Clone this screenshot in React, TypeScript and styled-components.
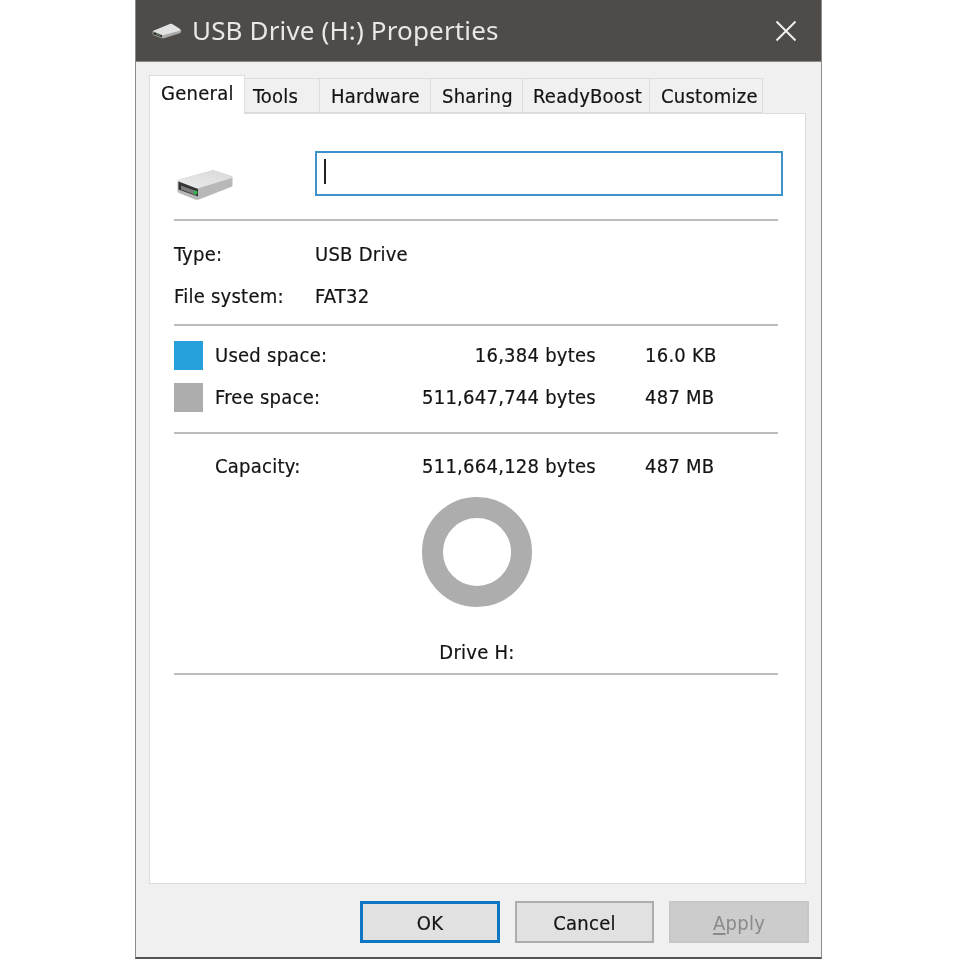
import React from "react";
import styled, { createGlobalStyle } from "styled-components";

const Global = createGlobalStyle`
  html, body { margin: 0; padding: 0; background: #fff; }
  body {
    font-family: "DejaVu Sans", "Noto Sans", sans-serif;
    font-stretch: condensed;
    letter-spacing: 0.25px;
    color: #141414;
    -webkit-text-stroke: 0.2px #141414;
  }
`;

const Page = styled.div`
  width: 960px;
  height: 960px;
  display: flex;
  padding-left: 135px;
  box-sizing: border-box;
  overflow: hidden;
`;

const Window = styled.div`
  width: 687px;
  height: 959px;
  flex: none;
  box-sizing: border-box;
  background: #f0f0f0;
  border-left: 1px solid #8c8c8c;
  border-right: 1px solid #8c8c8c;
  border-bottom: 2px solid #55524f;
  display: flex;
  flex-direction: column;
  filter: blur(0.35px);
`;

const TitleBar = styled.div`
  height: 62px;
  flex: none;
  background: #4e4b48;
  border-bottom: 1px solid #8a8886;
  box-sizing: border-box;
  display: flex;
  align-items: center;
  padding: 0 24px 0 16px;
  color: #e8e8e6;
  -webkit-text-stroke: 0;
  font-family: "Noto Sans", sans-serif;
  font-stretch: normal;
  letter-spacing: 0.15px;
  font-size: 26px;
`;

const TitleText = styled.span`
  margin-left: 10px;
  flex: 1;
  position: relative;
  top: -1px;
  white-space: nowrap;
`;

const Body = styled.div`
  flex: 1;
  padding: 13px 15px 0 13px;
  display: flex;
  flex-direction: column;
  min-height: 0;
`;

const TabStrip = styled.div`
  display: flex;
  align-items: flex-end;
  height: 38px;
  flex: none;
  position: relative;
  z-index: 1;
`;

const Tab = styled.div<{ $w: number; $pad?: number; $active?: boolean }>`
  width: ${(p) => p.$w}px;
  height: ${(p) => (p.$active ? 39 : 35)}px;
  margin-bottom: ${(p) => (p.$active ? -1 : 0)}px;
  box-sizing: border-box;
  background: ${(p) => (p.$active ? "#fff" : "#f0f0f0")};
  border: 1px solid #dcdcdc;
  border-left-width: ${(p) => (p.$active ? 1 : 0)}px;
  border-bottom: ${(p) => (p.$active ? "none" : "1px solid #dcdcdc")};
  display: flex;
  align-items: center;
  font-size: 20px;
  padding-left: ${(p) => p.$pad ?? 11}px;
  padding-bottom: ${(p) => (p.$active ? 4 : 0)}px;
  white-space: nowrap;
`;

const Panel = styled.div`
  width: 657px;
  height: 771px;
  box-sizing: border-box;
  background: #fff;
  border: 1px solid #dcdcdc;
  padding: 37px 27px 0 24px;
  display: flex;
  flex-direction: column;
`;

const NameRow = styled.div`
  height: 68px;
  display: flex;
  align-items: flex-start;
  flex: none;
`;

const DriveSlot = styled.div`
  width: 141px;
  flex: none;
  padding: 19px 0 0 3px;
  box-sizing: border-box;
`;

const NameField = styled.div`
  width: 468px;
  height: 45px;
  margin-right: -5px;
  box-sizing: border-box;
  border: 2px solid #3f92c9;
  display: flex;
  align-items: center;
  padding: 0 0 5px 7px;
`;

const Caret = styled.div`
  width: 2px;
  height: 25px;
  background: #222;
`;

const Rule = styled.div`
  height: 2px;
  flex: none;
  background: #bcbcbc;
`;

const InfoBlock = styled.div`
  padding: 12px 0 7px;
  display: flex;
  flex-direction: column;
`;

const InfoRow = styled.div`
  height: 42px;
  display: flex;
  align-items: center;
  font-size: 20px;
`;

const InfoLabel = styled.span`
  width: 141px;
`;

const SpaceBlock = styled.div`
  padding: 8px 0 14px;
  display: flex;
  flex-direction: column;
`;

const CapacityBlock = styled.div`
  padding: 11px 0 5px;
  display: flex;
  flex-direction: column;
`;

const SpaceRow = styled.div`
  height: 42px;
  display: flex;
  align-items: center;
  font-size: 20px;
`;

const Swatch = styled.div<{ $color?: string }>`
  width: 29px;
  height: 29px;
  margin-right: 12px;
  flex: none;
  background: ${(p) => p.$color ?? "transparent"};
`;

const SpaceLabel = styled.span`
  width: 150px;
`;

const Bytes = styled.span`
  width: 231px;
  text-align: right;
`;

const Short = styled.span`
  margin-left: 49px;
`;

const ChartArea = styled.div`
  display: flex;
  flex-direction: column;
  align-items: center;
  font-size: 20px;
`;

const Legend = styled.div`
  margin-top: 23px;
  height: 42px;
  display: flex;
  align-items: center;
  padding-left: 2px;
`;

const DonutSvg = styled.svg`
  display: block;
  margin-left: 1px;
  margin-top: 4px;
`;

const Footer = styled.div`
  display: flex;
  justify-content: flex-end;
  gap: 15px;
  margin-top: 17px;
  margin-right: -3px;
`;

const DlgButton = styled.div<{ $kind?: "primary" | "disabled"; $w?: number }>`
  width: ${(p) => p.$w ?? 140}px;
  height: 42px;
  box-sizing: border-box;
  background: ${(p) => (p.$kind === "disabled" ? "#cccccc" : "#e1e1e1")};
  border: ${(p) =>
    p.$kind === "primary"
      ? "3px solid #0f76c4"
      : p.$kind === "disabled"
        ? "2px solid #c6c6c6"
        : "2px solid #adadad"};
  color: ${(p) => (p.$kind === "disabled" ? "#8a8a8a" : "#141414")};
  -webkit-text-stroke: ${(p) => (p.$kind === "disabled" ? "0" : "0.2px #141414")};
  display: flex;
  align-items: center;
  justify-content: center;
  padding-top: 2px;
  font-size: 20px;
`;

const Access = styled.span`
  text-decoration: underline;
  text-underline-offset: 3px;
`;

const IconSvg = styled.svg`
  display: block;
  flex: none;
  filter: blur(0.5px);
`;

const CloseIcon = () => (
  <svg width="22" height="22" viewBox="0 0 22 22">
    <path d="M1.5 1.5 L20.5 20.5 M20.5 1.5 L1.5 20.5" stroke="#f0f0f0" strokeWidth="2" fill="none" />
  </svg>
);

const SmallDrive = () => (
  <IconSvg width="30" height="16" viewBox="0 0 30 16">
    <path d="M1 8 L18 1 Q19 0.500 20 1 L28 6 Q30 7 29 9 Q28.500 10 27 10.500 L13 15 Q11 15.500 9 15 L2 12.500 Q0 11.500 0.500 9.500 Q0.500 8.500 1 8 Z" fill="#a9a9a9" />
    <path d="M1 8 L18 1 Q19 0.500 20 1 L28 6 Q29 7 27 8 L12 12 Q11 12.300 10 12 Z" fill="#e2e2e2" />
    <path d="M1.500 9 L10 12.300 L10 14.500 L1.500 11.500 Z" fill="#2f302c" />
    <path d="M4 10.500 L8.500 12.300 L8.500 13.300 L4 11.600 Z" fill="#6e8f6e" />
  </IconSvg>
);

const LargeDrive = () => (
  <IconSvg width="56" height="31" viewBox="0 0 56 31">
    <defs>
      <linearGradient id="driveTop" x1="0" y1="1" x2="1" y2="0">
        <stop offset="0" stopColor="#ececec" />
        <stop offset="1" stopColor="#d8d8d8" />
      </linearGradient>
    </defs>
    <path d="M0.500 11 Q0.500 10 2 9.500 L35 0.500 Q36 0.200 37 0.600 L54 6 Q55.500 6.500 55.500 8 L55.500 15 Q55.500 16.500 54 17 L22 29.500 Q20 30.200 18 29.500 L2 23 Q0.500 22.500 0.500 21 Z" fill="#b8b8b8" />
    <path d="M0.500 11 Q0.500 10 2 9.500 L35 0.500 Q36 0.200 37 0.600 L54 6 Q55.500 6.500 55 8 L22 18 Q20 18.500 18 18 Z" fill="url(#driveTop)" />
    <path d="M1.500 11.500 L21 19 L21 26.500 L1.500 19.500 Z" fill="#333" />
    <path d="M4 15.500 L19 21 L19 25 L4 19.500 Z" fill="#7d7d7d" />
    <circle cx="18.500" cy="22.500" r="2" fill="#2fb84c" />
  </IconSvg>
);

const Donut = () => (
  <DonutSvg width="112" height="112" viewBox="0 0 112 112">
    <circle cx="56" cy="56" r="44.500" fill="none" stroke="#adadad" strokeWidth="21" />
  </DonutSvg>
);

export default function App() {
  return (
    <Page>
      <Global />
      <Window>
        <TitleBar>
          <SmallDrive />
          <TitleText>USB Drive (H:) Properties</TitleText>
          <CloseIcon />
        </TitleBar>
        <Body>
          <TabStrip>
            <Tab $w={96} $active>General</Tab>
            <Tab $w={75} $pad={8}>Tools</Tab>
            <Tab $w={111}>Hardware</Tab>
            <Tab $w={92}>Sharing</Tab>
            <Tab $w={127} $pad={10}>ReadyBoost</Tab>
            <Tab $w={113}>Customize</Tab>
          </TabStrip>
          <Panel>
            <NameRow>
              <DriveSlot><LargeDrive /></DriveSlot>
              <NameField><Caret /></NameField>
            </NameRow>
            <Rule />
            <InfoBlock>
              <InfoRow><InfoLabel>Type:</InfoLabel><span>USB Drive</span></InfoRow>
              <InfoRow><InfoLabel>File system:</InfoLabel><span>FAT32</span></InfoRow>
            </InfoBlock>
            <Rule />
            <SpaceBlock>
              <SpaceRow><Swatch $color="#26a0da" /><SpaceLabel>Used space:</SpaceLabel><Bytes>16,384 bytes</Bytes><Short>16.0 KB</Short></SpaceRow>
              <SpaceRow><Swatch $color="#adadad" /><SpaceLabel>Free space:</SpaceLabel><Bytes>511,647,744 bytes</Bytes><Short>487 MB</Short></SpaceRow>
            </SpaceBlock>
            <Rule />
            <CapacityBlock>
              <SpaceRow><Swatch /><SpaceLabel>Capacity:</SpaceLabel><Bytes>511,664,128 bytes</Bytes><Short>487 MB</Short></SpaceRow>
            </CapacityBlock>
            <ChartArea>
              <Donut />
              <Legend>Drive H:</Legend>
            </ChartArea>
            <Rule />
          </Panel>
          <Footer>
            <DlgButton $kind="primary">OK</DlgButton>
            <DlgButton $w={139}>Cancel</DlgButton>
            <DlgButton $kind="disabled"><span><Access>A</Access>pply</span></DlgButton>
          </Footer>
        </Body>
      </Window>
    </Page>
  );
}
